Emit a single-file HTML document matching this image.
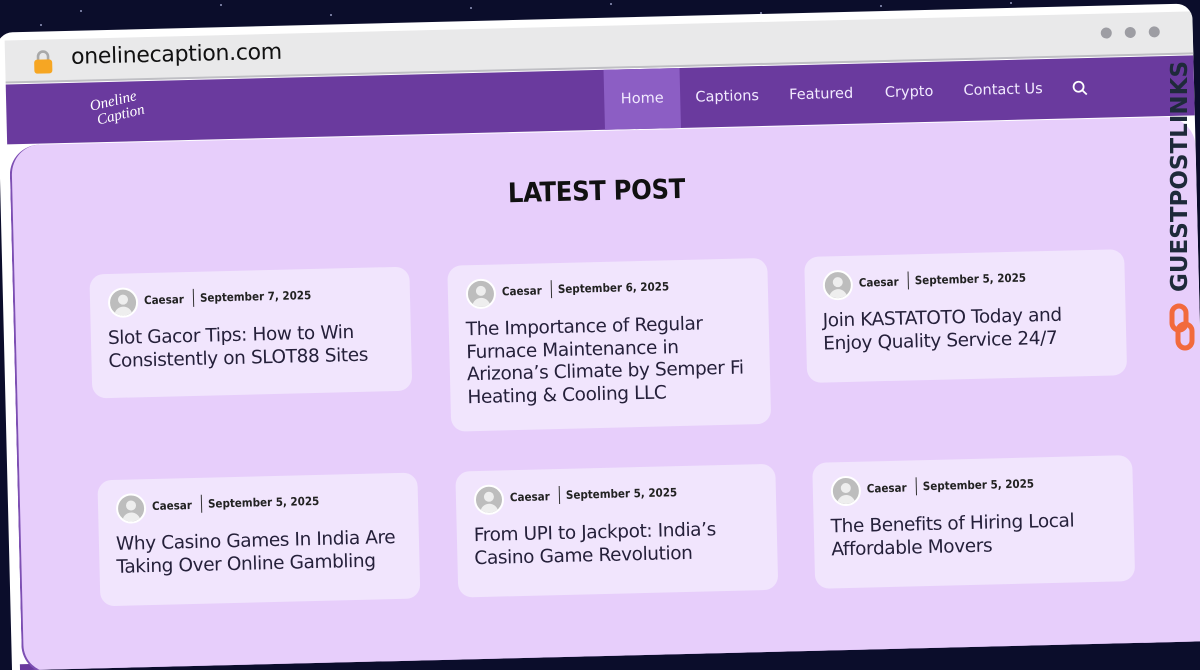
<!DOCTYPE html>
<html><head><meta charset="utf-8"><style>
*{margin:0;padding:0;box-sizing:border-box}
html,body{width:1200px;height:670px;overflow:hidden;background:#0b0d2b;font-family:"Liberation Sans","DejaVu Sans",sans-serif}
#clip{position:relative;width:1200px;height:670px;overflow:hidden}
.star{position:absolute;width:2px;height:2px;background:#cfd3ff;border-radius:50%;opacity:.7}
#rot{position:absolute;left:0;top:0;width:1200px;height:670px;transform:rotate(-1.4deg);transform-origin:600px 335px}
.win{position:absolute;left:4px;top:18px;width:1196px;height:638px;background:#fff;border-radius:16px 16px 0 0;overflow:hidden}
.chrome{position:absolute;left:8px;top:8px;right:0;height:43px;background:#e9e9ea;border-bottom:2px solid #bfbfc4}
.url{position:absolute;left:66px;top:6px;font-size:22px;color:#111;font-family:"DejaVu Sans",sans-serif;font-weight:500;letter-spacing:-.3px}
.lock{position:absolute;left:28px;top:9px;width:20px;height:26px}
.dot{position:absolute;top:14px;width:11px;height:11px;border-radius:50%;background:#9d9da3}
.nav{position:absolute;left:8px;top:52px;right:0;height:60px;background:#6a3a9e}
.nav a{position:absolute;top:0;height:60px;line-height:60px;color:#f2eaff;font-size:14.5px;font-family:"DejaVu Sans",sans-serif;text-decoration:none;transform:translateX(-50%)}
.home{background:#8c5ec4;width:76px;text-align:center}
.logo{position:absolute;left:85px;top:12px;color:#fff;font-family:"Liberation Serif",serif;font-style:italic;font-size:15px;line-height:15px;transform:rotate(-12deg)}
.panel{position:absolute;left:10px;top:113px;width:1186px;height:530px;background:#e7cefb;border:2px solid #7d4fb3;border-right:none;border-top:none;border-radius:30px 30px 0 30px}
.bottom{position:absolute;left:8px;top:632px;right:0;height:10px;background:#6a3a9e}
h1{position:absolute;left:0;width:1200px;top:176px;text-align:center;font-size:27px;color:#111;font-family:"DejaVu Sans Condensed","DejaVu Sans",sans-serif;font-weight:bold;letter-spacing:-.3px}
.card{position:absolute;width:320px;background:#f1e5fd;border-radius:14px}
.meta{position:absolute;left:18px;top:20px;font-size:11.5px;font-weight:bold;color:#222;font-family:"DejaVu Sans Condensed","DejaVu Sans",sans-serif}
.av{position:absolute;left:0;top:-6px;width:30px;height:30px;border-radius:50%;background:#bdbdbd;border:2px solid #fff;overflow:hidden}
.av:before{content:"";position:absolute;left:8px;top:5px;width:10px;height:10px;border-radius:50%;background:#eee}
.av:after{content:"";position:absolute;left:4px;top:17px;width:18px;height:14px;border-radius:9px 9px 0 0;background:#eee}
.meta .n{position:absolute;left:36px;top:0;white-space:nowrap}
.meta .d{position:absolute;left:85px;top:-3px;white-space:nowrap;border-left:1.5px solid #333;padding-left:6px;height:18px;line-height:18px}
.t{position:absolute;left:17px;top:54px;right:14px;font-size:18.5px;line-height:22.5px;color:#25203a;font-family:"DejaVu Sans",sans-serif;letter-spacing:-.4px}
.gpl{position:absolute;left:1167px;top:292px;transform-origin:0 0;transform:rotate(-90deg);font-family:"DejaVu Sans",sans-serif;font-weight:bold;font-size:23px;color:#1e2a3a;white-space:nowrap}
</style></head><body><div id="clip">
<div class="star" style="left:80px;top:10px"></div><div class="star" style="left:220px;top:4px"></div><div class="star" style="left:330px;top:14px"></div><div class="star" style="left:470px;top:7px"></div><div class="star" style="left:610px;top:3px"></div><div class="star" style="left:760px;top:12px"></div><div class="star" style="left:880px;top:5px"></div><div class="star" style="left:1010px;top:2px"></div><div class="star" style="left:1110px;top:9px"></div><div class="star" style="left:40px;top:24px"></div>
<div id="rot">
<div class="win">
 <div class="chrome">
  <svg class="lock" viewBox="0 0 20 26"><path d="M5 12V8a5 5 0 0 1 10 0v4" fill="none" stroke="#a9a9a9" stroke-width="2.6"/><rect x="1" y="11" width="18" height="14" rx="3" fill="#f6a623"/></svg>
  <div class="url">onelinecaption.com</div>
  <div class="dot" style="left:1096px"></div><div class="dot" style="left:1120px"></div><div class="dot" style="left:1144px"></div>
 </div>
 <div class="nav">
  <div class="logo">Oneline<br>&nbsp;Caption</div>
  <a class="home" style="left:636px">Home</a>
  <a style="left:721px">Captions</a>
  <a style="left:815px">Featured</a>
  <a style="left:903px">Crypto</a>
  <a style="left:997px">Contact Us</a>
  <svg style="position:absolute;left:1066px;top:22px" width="16" height="16" viewBox="0 0 16 16"><circle cx="6.5" cy="6.5" r="5" fill="none" stroke="#fff" stroke-width="1.8"/><path d="M10 10l4.5 4.5" stroke="#fff" stroke-width="1.8"/></svg>
 </div>
 <div class="bottom"></div>
 <div class="panel"></div>
</div>
<h1>LATEST POST</h1>
<div class="card" style="left:91px;top:262px;height:124px"><div class="meta"><div class="av"></div><span class="n">Caesar</span><span class="d">September 7, 2025</span></div><div class="t">Slot Gacor Tips: How to Win Consistently on SLOT88 Sites</div></div>
<div class="card" style="left:449px;top:262px;height:166px"><div class="meta"><div class="av"></div><span class="n">Caesar</span><span class="d">September 6, 2025</span></div><div class="t">The Importance of Regular Furnace Maintenance in Arizona’s Climate by Semper Fi Heating &amp; Cooling LLC</div></div>
<div class="card" style="left:806px;top:262px;height:126px"><div class="meta"><div class="av"></div><span class="n">Caesar</span><span class="d">September 5, 2025</span></div><div class="t">Join KASTATOTO Today and Enjoy Quality Service 24/7</div></div>
<div class="card" style="left:94px;top:468px;height:126px"><div class="meta"><div class="av"></div><span class="n">Caesar</span><span class="d">September 5, 2025</span></div><div class="t">Why Casino Games In India Are Taking Over Online Gambling</div></div>
<div class="card" style="left:452px;top:468px;height:126px"><div class="meta"><div class="av"></div><span class="n">Caesar</span><span class="d">September 5, 2025</span></div><div class="t">From UPI to Jackpot: India’s Casino Game Revolution</div></div>
<div class="card" style="left:809px;top:468px;height:126px"><div class="meta"><div class="av"></div><span class="n">Caesar</span><span class="d">September 5, 2025</span></div><div class="t">The Benefits of Hiring Local Affordable Movers</div></div>
</div>
<div class="gpl">GUESTPOSTLINKS</div>
<svg style="position:absolute;left:1169px;top:303px" width="26" height="48" viewBox="0 0 26 48"><rect x="3" y="3" width="14" height="24" rx="7" fill="none" stroke="#f26a3d" stroke-width="5"/><rect x="9" y="21" width="14" height="24" rx="7" fill="none" stroke="#f26a3d" stroke-width="5"/></svg>
</div></body></html>
